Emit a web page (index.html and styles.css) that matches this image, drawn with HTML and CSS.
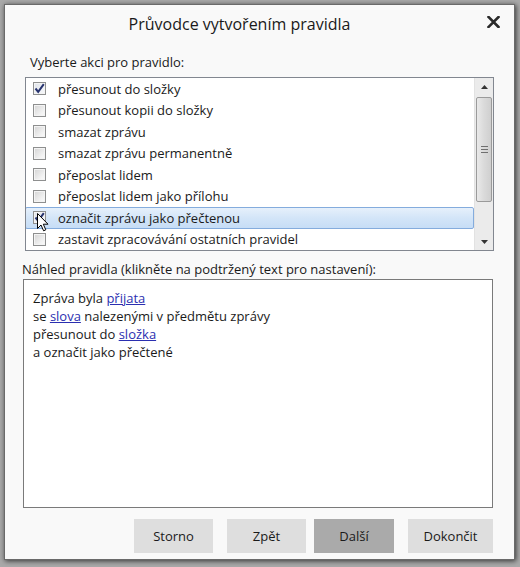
FILE: index.html
```html
<!DOCTYPE html>
<html lang="cs">
<head>
<meta charset="utf-8">
<title>Průvodce vytvořením pravidla</title>
<link rel="stylesheet" href="styles.css">
</head>
<body>
<div class="dialog">
  <div class="titlebar">
    <h1 class="title">Průvodce vytvořením pravidla</h1>
    <button class="close" aria-label="Zavřít">
      <svg width="13" height="12" viewBox="0 0 13 12"><path d="M1.5 1 L11.5 11 M11.5 1 L1.5 11" stroke="#2a2a2a" stroke-width="2.6" stroke-linecap="square"/></svg>
    </button>
  </div>
  <div class="label label-actions">Vyberte akci pro pravidlo:</div>
  <div class="listbox">
    <ul class="rows">
      <li class="row"><span class="cb checked"><svg width="11" height="11" viewBox="0 0 11 11"><path d="M1.5 5.5 L4.2 8.8 L9.8 1.2" fill="none" stroke="#27336e" stroke-width="2"/></svg></span><span class="txt">přesunout do složky</span></li>
      <li class="row"><span class="cb"></span><span class="txt">přesunout kopii do složky</span></li>
      <li class="row"><span class="cb"></span><span class="txt">smazat zprávu</span></li>
      <li class="row"><span class="cb"></span><span class="txt">smazat zprávu permanentně</span></li>
      <li class="row"><span class="cb"></span><span class="txt">přeposlat lidem</span></li>
      <li class="row"><span class="cb"></span><span class="txt">přeposlat lidem jako přílohu</span></li>
      <li class="row selected"><span class="cb checked"><svg width="11" height="11" viewBox="0 0 11 11"><path d="M1.5 5.5 L4.2 8.8 L9.8 1.2" fill="none" stroke="#27336e" stroke-width="2"/></svg></span><span class="txt">označit zprávu jako přečtenou</span></li>
      <li class="row"><span class="cb"></span><span class="txt">zastavit zpracovávání ostatních pravidel</span></li>
    </ul>
    <div class="scrollbar">
      <div class="sb-btn"><svg width="7" height="4" viewBox="0 0 7 4"><path d="M0 4 L3.5 0 L7 4 Z" fill="#333"/></svg></div>
      <div class="track">
        <div class="thumb"><span class="grip"></span></div>
      </div>
      <div class="sb-btn"><svg width="7" height="4" viewBox="0 0 7 4"><path d="M0 0 L3.5 4 L7 0 Z" fill="#333"/></svg></div>
    </div>
  </div>
  <div class="label label-preview">Náhled pravidla (klikněte na podtržený text pro nastavení):</div>
  <div class="preview">
    <div>Zpráva byla <a class="lnk">přijata</a></div>
    <div>se <a class="lnk">slova</a> nalezenými v předmětu zprávy</div>
    <div>přesunout do <a class="lnk">složka</a></div>
    <div>a označit jako přečtené</div>
  </div>
  <div class="footer">
    <button class="btn btn-storno">Storno</button>
    <button class="btn btn-zpet">Zpět</button>
    <button class="btn btn-dalsi">Další</button>
    <button class="btn btn-dokoncit">Dokončit</button>
  </div>
</div>
<svg class="cursor" width="13" height="20" viewBox="0 0 13 20"><path d="M0.5 0.5 L0.5 15.5 L4 12 L6.6 17.8 L8.8 16.8 L6.3 11.2 L11 11.2 Z" fill="#fff" stroke="#000" stroke-width="1" stroke-linejoin="miter"/></svg>
</body>
</html>
```

FILE: styles.css
```css
html, body {
  margin: 0;
  padding: 0;
}
body {
  background: #a9a9a9;
  padding: 4px 0 0 4px;
  height: 567px;
  box-sizing: border-box;
  overflow: hidden;
  font-family: "Open Sans", "Noto Sans", sans-serif;
  color: #1a1a1a;
  position: relative;
}
.dialog {
  width: 511px;
  height: 556px;
  box-sizing: border-box;
  background: #f9f9f9;
  border: 1px solid #6a6a6a;
  box-shadow: 1px 1px 5px rgba(0,0,0,0.7);
  display: flex;
  flex-direction: column;
}
.titlebar {
  height: 48px;
  position: relative;
  display: flex;
  justify-content: center;
  padding-right: 40px;
  flex-shrink: 0;
}
.title {
  margin: 9px 0 0;
  font-size: 16px;
  line-height: 20px;
  font-weight: normal;
  color: #1a1a1a;
}
.close {
  position: absolute;
  right: 14px;
  top: 11px;
  border: 0;
  background: transparent;
  padding: 0;
  width: 13px;
  height: 12px;
  display: flex;
}
.label {
  font-size: 13px;
  line-height: 18px;
  height: 18px;
  white-space: nowrap;
  flex-shrink: 0;
}
.label-actions {
  margin: 0 0 6px 25px;
}
.listbox {
  margin-left: 20px;
  width: 469px;
  height: 174px;
  box-sizing: border-box;
  border: 1px solid #828790;
  background: #fff;
  display: flex;
  flex-shrink: 0;
}
.rows {
  list-style: none;
  margin: 0;
  padding: 0;
  flex: 1;
  overflow: hidden;
}
.row {
  height: 21.5px;
  box-sizing: border-box;
  display: flex;
  align-items: center;
  padding-left: 6px;
  font-size: 13px;
  white-space: nowrap;
  border: 1px solid transparent;
}
.row.selected {
  border-color: #84acdd;
  border-radius: 2px;
  background: linear-gradient(#e6f0fb, #d3e5f8 50%, #c6ddf6);
  margin-left: -1px;
  padding-left: 7px;
}
.cb {
  width: 13px;
  height: 13px;
  box-sizing: border-box;
  border: 1px solid #8e8f8f;
  background: linear-gradient(135deg, #d4d4d4, #f2f2f2 70%, #fbfbfb);
  box-shadow: inset 0 0 0 1px #f4f4f4;
  margin-right: 12px;
  display: flex;
  align-items: center;
  justify-content: center;
  flex-shrink: 0;
}
.cb.checked {
  background: linear-gradient(135deg, #dfe3ea, #f8f9fb);
}
.cb svg {
  display: block;
}
.txt {
  color: #1a1a1a;
}
.scrollbar {
  width: 18px;
  background: #ebebeb;
  border-left: 1px solid #e2e2e2;
  display: flex;
  flex-direction: column;
  flex-shrink: 0;
}
.sb-btn {
  height: 17px;
  display: flex;
  align-items: center;
  justify-content: center;
  flex-shrink: 0;
}
.track {
  flex: 1;
}
.thumb {
  margin: 2px 1px 0 1px;
  height: 105px;
  box-sizing: border-box;
  border: 1px solid #9a9a9a;
  border-radius: 2px;
  background: linear-gradient(90deg, #e9e9e9, #dadada 50%, #cfcfcf);
  display: flex;
  align-items: center;
  justify-content: center;
}
.grip {
  width: 7px;
  height: 7px;
  background: repeating-linear-gradient(#6f6f6f 0 1px, transparent 1px 3px);
}
.label-preview {
  margin: 9px 0 1px 17px;
}
.preview {
  margin-left: 18px;
  width: 470px;
  height: 229px;
  box-sizing: border-box;
  border: 1px solid #7a7a7a;
  background: #fff;
  padding: 9px 0 0 9px;
  font-size: 13px;
  line-height: 18px;
  color: #1a1a1a;
  flex-shrink: 0;
}
.lnk {
  color: #2b2fb0;
  text-decoration: underline;
}
.footer {
  display: flex;
  justify-content: flex-end;
  padding: 11px 21px 0 0;
}
.btn {
  height: 34px;
  border: 0;
  background: #dedede;
  font-family: "Open Sans", "Noto Sans", sans-serif;
  font-size: 13px;
  color: #1a1a1a;
  padding: 0;
}
.btn-storno { width: 79px; margin-right: 14px; }
.btn-zpet { width: 79px; margin-right: 8px; }
.btn-dalsi { width: 80px; margin-right: 14px; background: #aaaaaa; }
.btn-dokoncit { width: 85px; }
.cursor {
  position: absolute;
  left: 37px;
  top: 213px;
}
```
